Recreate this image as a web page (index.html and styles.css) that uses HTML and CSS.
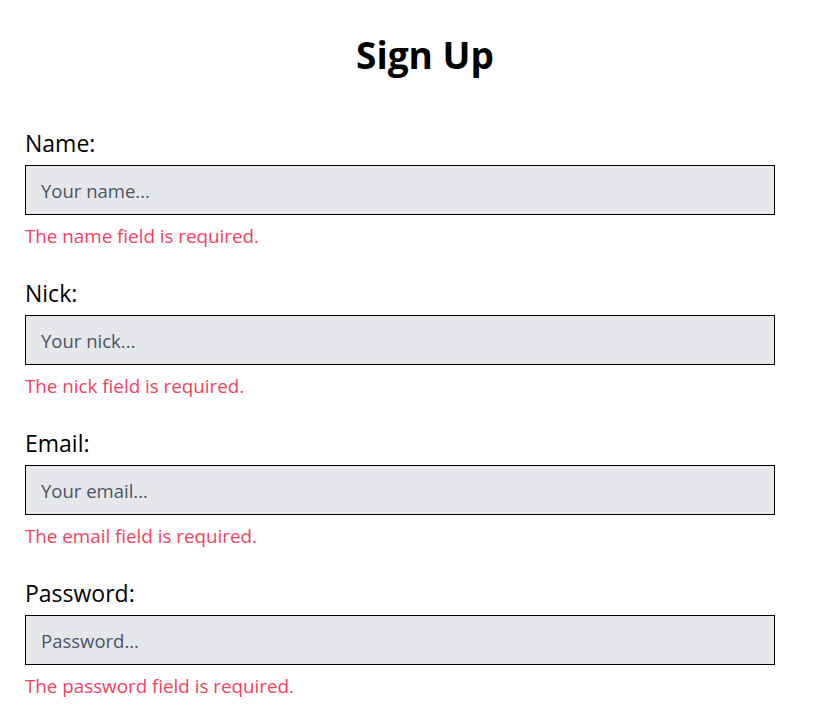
FILE: index.html
```html
<!DOCTYPE html>
<html lang="en">
<head>
<meta charset="utf-8">
<title>Sign Up</title>
<link rel="stylesheet" href="styles.css">
</head>
<body>
<main class="page">
  <h1 class="title">Sign Up</h1>
  <form class="form">
    <div class="field">
      <label class="label" for="name">Name:</label>
      <input class="input" id="name" type="text" placeholder="Your name...">
      <p class="error">The name field is required.</p>
    </div>
    <div class="field">
      <label class="label" for="nick">Nick:</label>
      <input class="input" id="nick" type="text" placeholder="Your nick...">
      <p class="error">The nick field is required.</p>
    </div>
    <div class="field">
      <label class="label" for="email">Email:</label>
      <input class="input" id="email" type="email" placeholder="Your email...">
      <p class="error">The email field is required.</p>
    </div>
    <div class="field">
      <label class="label" for="password">Password:</label>
      <input class="input" id="password" type="password" placeholder="Password...">
      <p class="error">The password field is required.</p>
    </div>
  </form>
</main>
</body>
</html>
```
FILE: styles.css
```css
* { box-sizing: border-box; }
html, body { margin: 0; padding: 0; background: #fff; }
body {
  font-family: "Open Sans", "Noto Sans", sans-serif;
  color: #000;
}
.page {
  padding: 0 25px;
}
.title {
  margin: 31px 0 0;
  padding-left: 32px;
  text-align: center;
  font-size: 37px;
  line-height: 48px;
  font-weight: 700;
}
.form {
  width: 750px;
  margin-top: 48px;
  display: flex;
  flex-direction: column;
  gap: 27px;
}
.field {
  display: flex;
  flex-direction: column;
}
.label {
  font-size: 23px;
  line-height: 32px;
  margin-bottom: 6px;
}
.input {
  height: 50px;
  width: 100%;
  border: 1px solid #000;
  border-radius: 0;
  background: #e5e7eb;
  padding: 0 15px;
  font-family: inherit;
  font-size: 18.5px;
  color: #111;
  outline: none;
}
.input::placeholder { color: #4b5563; opacity: 1; }
.error {
  margin: 7px 0 0;
  font-size: 18.8px;
  line-height: 28px;
  color: #f43f5e;
}
```
